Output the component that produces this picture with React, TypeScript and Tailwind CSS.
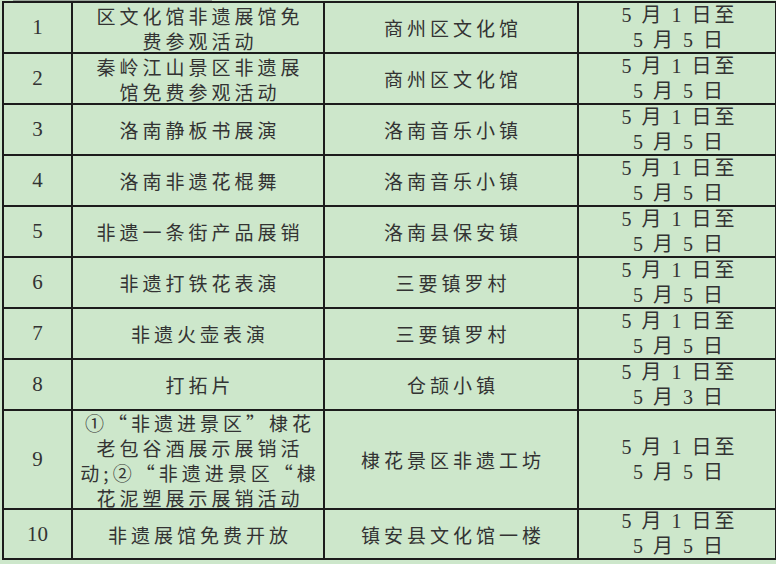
import React from "react";

type Row = { n: string; act: React.ReactNode; loc: string; d1: string; d2: string };

const D1 = "5\u2009月\u20091\u2009日至";
const D2 = "5\u2009月\u20095\u2009日";

const rows: Row[] = [
  { n: "1", act: <>区文化馆非遗展馆免<br />费参观活动</>, loc: "商州区文化馆", d1: D1, d2: D2 },
  { n: "2", act: <>秦岭江山景区非遗展<br />馆免费参观活动</>, loc: "商州区文化馆", d1: D1, d2: D2 },
  { n: "3", act: "洛南静板书展演", loc: "洛南音乐小镇", d1: D1, d2: D2 },
  { n: "4", act: "洛南非遗花棍舞", loc: "洛南音乐小镇", d1: D1, d2: D2 },
  { n: "5", act: "非遗一条街产品展销", loc: "洛南县保安镇", d1: D1, d2: D2 },
  { n: "6", act: "非遗打铁花表演", loc: "三要镇罗村", d1: D1, d2: D2 },
  { n: "7", act: "非遗火壶表演", loc: "三要镇罗村", d1: D1, d2: D2 },
  { n: "8", act: "打拓片", loc: "仓颉小镇", d1: D1, d2: "5\u2009月\u20093\u2009日" },
  {
    n: "9",
    act: (
      <span className="leading-[23.5px]">
        ①“非遗进景区”棣花<br />老包谷酒展示展销活<br />动;②“非遗进景区“棣<br />花泥塑展示展销活动
      </span>
    ),
    loc: "棣花景区非遗工坊",
    d1: D1,
    d2: D2,
  },
  { n: "10", act: "非遗展馆免费开放", loc: "镇安县文化馆一楼", d1: D1, d2: D2 },
];

const cjk = "font-['Noto_Sans_CJK_SC',sans-serif] text-[19px] tracking-[4px]";
const serif = "font-['Liberation_Serif','Noto_Sans_CJK_SC',serif]";
const cell = "bg-[#cde7cb] flex items-center justify-center text-center text-[#333333] leading-[25px] whitespace-nowrap";

export default function App() {
  return (
    <div className="w-[776px] h-[564px] bg-[#cde7cb] overflow-hidden">
      <div className="h-px flex">
        <div className="ml-[13px] w-[199px] h-px bg-[#9aa59a]" />
      </div>
      <div className="ml-[2px] w-[775px] bg-[#1c1c1c] p-[2px] grid gap-[2px] grid-cols-[67px_250px_252px_196px] grid-rows-[49px_49px_49px_49px_49px_49px_49px_49px_97px_48px]">
        {rows.map((r) => (
          <React.Fragment key={r.n}>
            <div className={`${cell} ${serif} text-[21px]`}>{r.n}</div>
            <div className={`${cell} ${cjk}`}>
              <div className="pl-[4px]">{r.act}</div>
            </div>
            <div className={`${cell} ${cjk}`}>
              <div className="pl-[4px]">{r.loc}</div>
            </div>
            <div className={`${cell} ${serif} flex-col text-[20px] tracking-[3px]`}>
              <div className="pl-[5px]">{r.d1}</div>
              <div className="pl-[5px]">{r.d2}</div>
            </div>
          </React.Fragment>
        ))}
      </div>
    </div>
  );
}
